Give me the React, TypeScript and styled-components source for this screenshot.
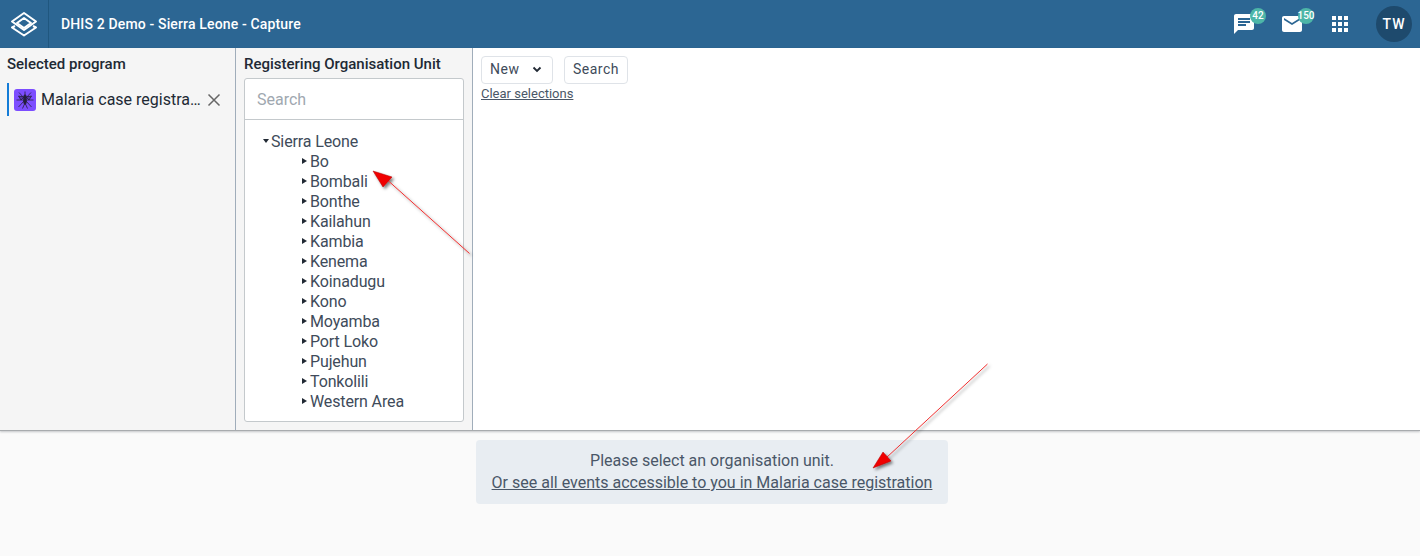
import { createGlobalStyle, styled } from "styled-components";

const GlobalStyle = createGlobalStyle`
  html, body {
    margin: 0;
    padding: 0;
    background: #fafafa;
    font-family: Roboto, "Liberation Sans", sans-serif;
  }
  * {
    box-sizing: border-box;
  }
`;

const Page = styled.div`
  position: relative;
  width: 1420px;
  height: 556px;
  overflow: hidden;
  background: #fafafa;
`;

const Header = styled.header`
  height: 48px;
  background: #2c6693;
  display: flex;
  align-items: center;
  color: #fff;
`;

const LogoCell = styled.div`
  width: 49px;
  height: 48px;
  display: flex;
  align-items: center;
  justify-content: center;
  border-right: 1px solid #20577f;
`;

const AppTitle = styled.div`
  margin-left: 12px;
  font-size: 14px;
  font-weight: 500;
  letter-spacing: 0.15px;
  flex: 1;
`;

const HeaderIcons = styled.div`
  display: flex;
  align-items: center;
  height: 48px;
`;

const IconSlot = styled.div`
  position: relative;
  width: 48px;
  height: 48px;
  display: flex;
  align-items: center;
  justify-content: center;
`;

const Badge = styled.span`
  position: absolute;
  top: 8px;
  left: 30px;
  width: 16px;
  height: 16px;
  border-radius: 50%;
  background: #4db6a8;
  color: #fff;
  font-size: 10px;
  font-weight: 500;
  line-height: 16px;
  display: flex;
  justify-content: center;
`;

const Avatar = styled.div`
  width: 36px;
  height: 36px;
  margin: 0 8px 0 12px;
  border-radius: 50%;
  background: #1e4a6d;
  font-size: 14px;
  font-weight: 500;
  letter-spacing: 1px;
  line-height: 36px;
  text-align: center;
`;

const TopSection = styled.section`
  height: 383px;
  display: flex;
  background: #fff;
  border-bottom: 1px solid #a8abae;
  box-shadow: 0 1px 2px rgba(33, 41, 52, 0.25);
`;

const Column = styled.div<{ $width: number }>`
  width: ${(p) => p.$width}px;
  flex-shrink: 0;
  background: #f5f5f5;
  border-right: 1px solid #a0adba;
  padding: 7px 8px 0;
`;

const ProgramColumn = styled(Column)`
  padding-left: 7px;
`;

const ColumnTitle = styled.div`
  font-size: 15px;
  font-weight: 500;
  line-height: 18px;
  color: #212934;
`;

const SelectedProgram = styled.div`
  display: flex;
  align-items: center;
  height: 33px;
  margin-top: 10px;
  padding-left: 5px;
  border-left: 2px solid #147cd7;
`;

const ProgramIcon = styled.div`
  width: 22px;
  height: 22px;
  border-radius: 3px;
  background: #7c4dff;
  display: flex;
  align-items: center;
  justify-content: center;
  flex-shrink: 0;
`;

const ProgramName = styled.span`
  width: 160px;
  margin-left: 5px;
  font-size: 16px;
  color: #212934;
  white-space: nowrap;
  overflow: hidden;
  text-overflow: ellipsis;
`;

const ClearButton = styled.div`
  margin-left: 5px;
  display: flex;
  color: #666;
`;

const OrgUnitBox = styled.div`
  width: 220px;
  height: 344px;
  margin-top: 5px;
  background: #fff;
  border: 1px solid #c4c9cc;
  border-radius: 3px;
`;

const OrgUnitSearch = styled.div`
  height: 41px;
  padding: 0 12px;
  border-bottom: 1px solid #c4c9cc;
  font-size: 16px;
  line-height: 41px;
  color: #a0a8b0;
`;

const Tree = styled.ul`
  list-style: none;
  margin: 0;
  padding: 11px 0 0 18px;
`;

const TreeRow = styled.li<{ $child?: boolean }>`
  display: flex;
  align-items: center;
  height: 20px;
  padding-left: ${(p) => (p.$child ? 39 : 0)}px;
  font-size: 16px;
  letter-spacing: -0.13px;
  color: #404b5a;
`;

const Caret = styled.span<{ $open?: boolean }>`
  width: 0;
  height: 0;
  flex-shrink: 0;
  border-style: solid;
  ${(p) =>
    p.$open
      ? `border-width: 4px 3px 0 3px; margin-right: 2px; border-color: #212934 transparent transparent;`
      : `border-width: 3px 0 3px 5px; margin-right: 3px; border-color: transparent transparent transparent #212934;`}
`;

const Main = styled.div`
  flex: 1;
  padding: 8px;
`;

const Actions = styled.div`
  display: flex;
  gap: 11px;
`;

const Button = styled.button`
  height: 28px;
  padding: 0 8px 2px;
  display: flex;
  align-items: center;
  justify-content: space-between;
  background: #fff;
  border: 1px solid #dfe3e8;
  border-radius: 4px;
  font-family: inherit;
  font-size: 14px;
  letter-spacing: 0.5px;
  color: #404b5a;
`;

const NewButton = styled(Button)`
  width: 72px;
  padding-right: 10px;
`;

const ClearLink = styled.a`
  display: block;
  margin-top: 2px;
  font-size: 13px;
  line-height: 15px;
  color: #4a5768;
  text-decoration: underline;
`;

const Notice = styled.div`
  width: 472px;
  height: 64px;
  margin: 9px 0 0 476px;
  padding-top: 10px;
  background: #e8edf2;
  border-radius: 4px;
  text-align: center;
  font-size: 16px;
  line-height: 22px;
  color: #4a5768;
`;

const NoticeLink = styled.a`
  display: block;
  text-decoration: underline;
`;

const ArrowLayer = styled.svg`
  position: absolute;
  inset: 0;
  pointer-events: none;
`;

const districts = [
  "Bo",
  "Bombali",
  "Bonthe",
  "Kailahun",
  "Kambia",
  "Kenema",
  "Koinadugu",
  "Kono",
  "Moyamba",
  "Port Loko",
  "Pujehun",
  "Tonkolili",
  "Western Area",
];

const DhisLogo = () => (
  <svg width="28" height="26" viewBox="0 0 28 26" fill="none" stroke="#fff" strokeWidth="2" strokeLinejoin="round">
    <path d="M14 2 L26 10.5 L14 19 L2 10.5 Z" />
    <path d="M14 7 L21 12 L14 17 L7 12 Z" />
    <path d="M5 15 L2 16.5 L14 24.5 L26 16.5 L23 15" />
  </svg>
);

const Mosquito = () => (
  <svg width="20" height="20" viewBox="0 0 20 20" fill="none" stroke="#241f3d" strokeWidth="0.8">
    <ellipse cx="10" cy="9.5" rx="1.4" ry="5" fill="#241f3d" />
    <path d="M10 4.5 V1.5 M9 8 L4 2.5 M11 8 L16 2.5 M9 10 H1.5 M11 10 H18.5 M9 11 L3.5 17 M11 11 L16.5 17 M9.5 14 L7.5 18.5 M10.5 14 L12.5 18.5" />
    <path d="M9 7 L3.5 6 L6 10 Z M11 7 L16.5 6 L14 10 Z" fill="#241f3d" fillOpacity="0.45" />
  </svg>
);

const App = () => (
  <Page>
    <GlobalStyle />
    <Header>
      <LogoCell>
        <DhisLogo />
      </LogoCell>
      <AppTitle>DHIS 2 Demo - Sierra Leone - Capture</AppTitle>
      <HeaderIcons>
        <IconSlot>
          <svg width="24" height="24" viewBox="0 0 24 24" fill="#fff">
            <path d="M20 2H4c-1.1 0-2 .9-2 2v18l4-4h14c1.1 0 2-.9 2-2V4c0-1.1-.9-2-2-2zM6 9h12v2H6V9zm8 5H6v-2h8v2zm4-6H6V6h12v2z" />
          </svg>
          <Badge>42</Badge>
        </IconSlot>
        <IconSlot>
          <svg width="24" height="24" viewBox="0 0 24 24" fill="#fff">
            <path d="M20 4H4c-1.1 0-2 .9-2 2v12c0 1.1.9 2 2 2h16c1.1 0 2-.9 2-2V6c0-1.1-.9-2-2-2zm0 4l-8 5-8-5V6l8 5 8-5v2z" />
          </svg>
          <Badge>150</Badge>
        </IconSlot>
        <IconSlot>
          <svg width="24" height="24" viewBox="0 0 24 24" fill="#fff">
            <path d="M4 8h4V4H4v4zm6 12h4v-4h-4v4zm-6 0h4v-4H4v4zm0-6h4v-4H4v4zm6 0h4v-4h-4v4zm6-10v4h4V4h-4zm-6 4h4V4h-4v4zm6 6h4v-4h-4v4zm0 6h4v-4h-4v4z" />
          </svg>
        </IconSlot>
        <Avatar>TW</Avatar>
      </HeaderIcons>
    </Header>

    <TopSection>
      <ProgramColumn $width={236}>
        <ColumnTitle>Selected program</ColumnTitle>
        <SelectedProgram>
          <ProgramIcon>
            <Mosquito />
          </ProgramIcon>
          <ProgramName>Malaria case registration</ProgramName>
          <ClearButton>
            <svg width="16" height="16" viewBox="0 0 16 16" stroke="currentColor" strokeWidth="1.5">
              <path d="M2.5 2.5 L13.5 13.5 M13.5 2.5 L2.5 13.5" />
            </svg>
          </ClearButton>
        </SelectedProgram>
      </ProgramColumn>

      <Column $width={237}>
        <ColumnTitle>Registering Organisation Unit</ColumnTitle>
        <OrgUnitBox>
          <OrgUnitSearch>Search</OrgUnitSearch>
          <Tree>
            <TreeRow>
              <Caret $open />
              Sierra Leone
            </TreeRow>
            {districts.map((name) => (
              <TreeRow $child key={name}>
                <Caret />
                {name}
              </TreeRow>
            ))}
          </Tree>
        </OrgUnitBox>
      </Column>

      <Main>
        <Actions>
          <NewButton>
            New
            <svg width="10" height="10" viewBox="0 0 10 10" fill="none" stroke="#212934" strokeWidth="1.8">
              <path d="M1.5 3.5 L5 7 L8.5 3.5" />
            </svg>
          </NewButton>
          <Button>Search</Button>
        </Actions>
        <ClearLink>Clear selections</ClearLink>
      </Main>
    </TopSection>

    <Notice>
      Please select an organisation unit.
      <NoticeLink>Or see all events accessible to you in Malaria case registration</NoticeLink>
    </Notice>

    <ArrowLayer width="1420" height="556" viewBox="0 0 1420 556">
      <defs>
        <filter id="arrowShadow" x="-20%" y="-20%" width="150%" height="150%">
          <feDropShadow dx="2" dy="2" stdDeviation="1.5" floodColor="#000" floodOpacity="0.5" />
        </filter>
      </defs>
      <g filter="url(#arrowShadow)">
        <path d="M469.5 253.5 L384 177" stroke="#f03030" strokeWidth="1" fill="none" />
        <path d="M373 171 L392 177 L383 187 Z" fill="#f00000" stroke="#b00000" strokeWidth="0.5" />
        <path d="M987.5 364 L886 458" stroke="#f03030" strokeWidth="1" fill="none" />
        <path d="M873 468 L883 452 L891 461 Z" fill="#f00000" stroke="#b00000" strokeWidth="0.5" />
      </g>
    </ArrowLayer>
  </Page>
);

export default App;
